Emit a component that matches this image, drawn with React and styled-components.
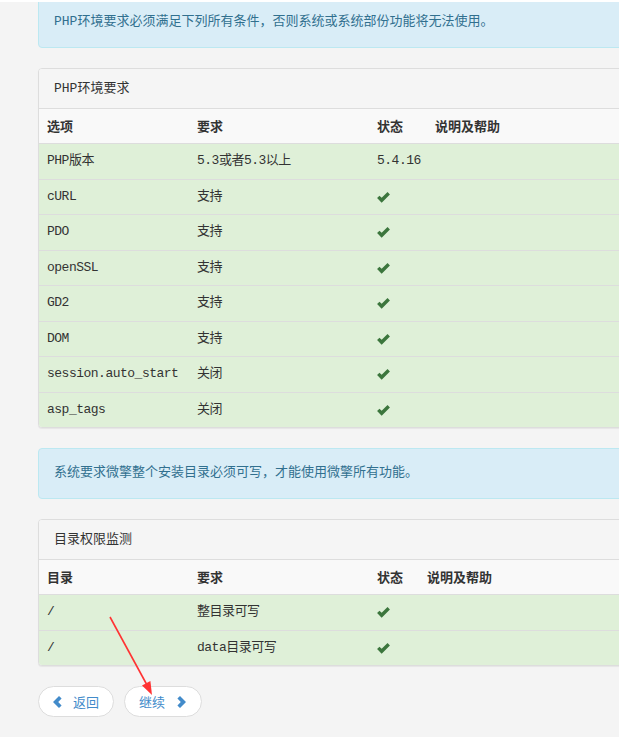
import React from 'react';
import styled, { createGlobalStyle } from 'styled-components';

const GlobalStyle = createGlobalStyle`
  html, body {
    margin: 0;
    padding: 0;
    background: #fff;
  }
  body {
    font-family: "Liberation Mono", "Noto Sans CJK SC", monospace;
    font-size: 13px;
    color: #333;
  }
`;

const Page = styled.div`
  position: relative;
  width: 623px;
  height: 737px;
  display: flex;
  padding-top: 2px;
  box-sizing: border-box;
  overflow: hidden;
`;

const Content = styled.div`
  width: 619px;
  height: 100%;
  background: #f4f4f4;
  overflow: hidden;
  padding-left: 38px;
  box-sizing: border-box;
`;

const Inner = styled.div`
  width: 620px;
  display: flex;
  flex-direction: column;
  gap: 20px;
`;

const Alert = styled.div`
  margin-top: ${p => (p.$first ? '-5px' : '0')};
  padding: 15px;
  line-height: 18.5px;
  background: #d9edf7;
  border: 1px solid #bce8f1;
  border-radius: 4px;
  color: #31708f;
`;

const Panel = styled.div`
  background: #fff;
  border: 1px solid #ddd;
  border-radius: 4px;
  box-shadow: 0 1px 1px rgba(0, 0, 0, 0.06);
  overflow: hidden;
`;

const PanelHeading = styled.div`
  padding: 10px 15px;
  line-height: 19px;
  background: #f5f5f5;
  border-bottom: 1px solid #ddd;
`;

const Table = styled.table`
  width: 100%;
  border-collapse: collapse;
  table-layout: fixed;
`;

const Th = styled.th`
  box-sizing: border-box;
  width: ${p => (p.$w ? `${p.$w}px` : 'auto')};
  text-align: left;
  padding: 8px;
  line-height: 18.5px;
  font-weight: 700;
  font-family: "Noto Sans CJK SC", sans-serif;
  background: #f9f9f9;
  color: #333;
`;

const Row = styled.tr`
  background: #dff0d8;
  border-top: 1px solid #ddd;
`;

const Td = styled.td`
  padding: 8px;
  line-height: 18.5px;
  letter-spacing: -0.5px;
  white-space: nowrap;
  vertical-align: middle;
`;

const Check = styled.svg`
  display: block;
  width: 13px;
  height: 11px;
  margin-top: 1px;
`;

const Buttons = styled.div`
  display: flex;
  gap: 10px;
`;

const PillButton = styled.button`
  display: flex;
  align-items: center;
  gap: ${p => (p.$next ? '12px' : '11px')};
  height: 31px;
  padding: 0 ${p => (p.$next ? '15px' : '14px')} 0 14px;
  background: #fff;
  border: 1px solid #ddd;
  border-radius: 16px;
  color: #428bca;
  font-family: "Noto Sans CJK SC", sans-serif;
  font-size: 13px;
  cursor: pointer;
`;

const Chevron = styled.svg`
  width: 9px;
  height: 12px;
  fill: #428bca;
`;

const Annotation = styled.svg`
  position: absolute;
  left: 0;
  top: 0;
  pointer-events: none;
`;

const OkIcon = () => (
  <Check viewBox="0 0 14 12">
    <polygon points="0,6.5 2.6,4 5,6.4 11.4,0 14,2.6 5,11.6" fill="#3c763d" />
  </Check>
);

const envRows = [
  ['PHP版本', '5.3或者5.3以上', '5.4.16'],
  ['cURL', '支持', null],
  ['PDO', '支持', null],
  ['openSSL', '支持', null],
  ['GD2', '支持', null],
  ['DOM', '支持', null],
  ['session.auto_start', '关闭', null],
  ['asp_tags', '关闭', null],
];

const dirRows = [
  ['/', '整目录可写', null],
  ['/', 'data目录可写', null],
];

function CheckTable({ head, rows, stateWidth }) {
  return (
    <Table>
      <thead>
        <tr>
          <Th $w={150}>{head}</Th>
          <Th $w={180}>要求</Th>
          <Th $w={stateWidth}>状态</Th>
          <Th>说明及帮助</Th>
        </tr>
      </thead>
      <tbody>
        {rows.map((r, i) => (
          <Row key={i}>
            <Td>{r[0]}</Td>
            <Td>{r[1]}</Td>
            <Td>{r[2] ? r[2] : <OkIcon />}</Td>
            <Td />
          </Row>
        ))}
      </tbody>
    </Table>
  );
}

export default function App() {
  return (
    <>
      <GlobalStyle />
      <Page>
        <Content>
          <Inner>
            <Alert $first>PHP环境要求必须满足下列所有条件，否则系统或系统部份功能将无法使用。</Alert>
            <Panel>
              <PanelHeading>PHP环境要求</PanelHeading>
              <CheckTable head="选项" rows={envRows} stateWidth={58} />
            </Panel>
            <Alert>系统要求微擎整个安装目录必须可写，才能使用微擎所有功能。</Alert>
            <Panel>
              <PanelHeading>目录权限监测</PanelHeading>
              <CheckTable head="目录" rows={dirRows} stateWidth={50} />
            </Panel>
            <Buttons>
              <PillButton>
                <Chevron viewBox="0 0 9 12">
                  <polygon points="0,6 6,0 8.6,2.6 5.2,6 8.6,9.4 6,12" />
                </Chevron>
                返回
              </PillButton>
              <PillButton $next>
                继续
                <Chevron viewBox="0 0 9 12">
                  <polygon points="9,6 3,0 0.4,2.6 3.8,6 0.4,9.4 3,12" />
                </Chevron>
              </PillButton>
            </Buttons>
          </Inner>
        </Content>
        <Annotation width="623" height="737" viewBox="0 0 623 737">
          <line x1="110" y1="617" x2="147" y2="685" stroke="#f33" strokeWidth="1.6" />
          <polygon points="152,695 150.4,681 142,685.6" fill="#f33" />
        </Annotation>
      </Page>
    </>
  );
}
